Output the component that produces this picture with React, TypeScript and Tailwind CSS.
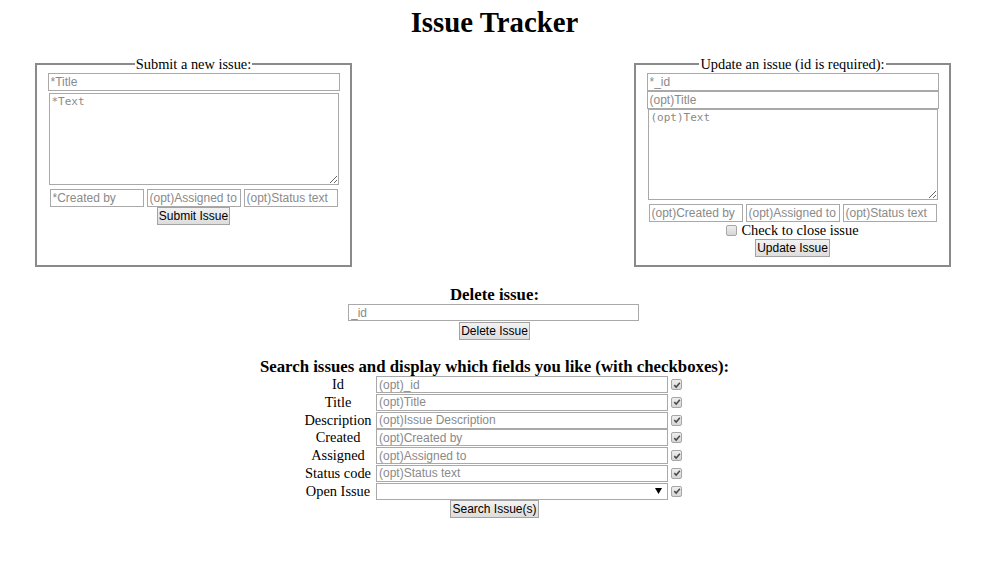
import React from "react";

const serif = "font-['Liberation_Serif','Times_New_Roman',serif]";
const field =
  "border border-[#a9a9a9] bg-white px-[2px] text-[12px] leading-none text-black outline-none font-['Liberation_Sans',Arial,sans-serif] placeholder:text-[#8a8a8a]";
const area =
  "border border-[#a9a9a9] bg-white px-[2px] py-[1px] text-[11px] leading-[14px] outline-none font-['DejaVu_Sans_Mono',monospace] placeholder:text-[#8a8a8a]";
const button =
  "h-[18px] border border-[#a3a3a3] bg-gradient-to-b from-[#f2f2f2] to-[#dddddd] px-[1px] text-[12px] leading-none text-black font-['Liberation_Sans',Arial,sans-serif]";

function Check({ checked }: { checked?: boolean }) {
  return (
    <span className="inline-flex h-[11px] w-[11px] items-center justify-center rounded-[2px] border border-[#a6a6a6] bg-gradient-to-b from-[#eeeeee] to-[#d6d6d6]">
      {checked && (
        <svg viewBox="0 0 10 10" className="h-[8px] w-[8px]">
          <path d="M1.6 5.2 L4 7.6 L8.6 2.2" fill="none" stroke="#4a4a4a" strokeWidth="1.9" />
        </svg>
      )}
    </span>
  );
}

function SubmitForm() {
  return (
    <fieldset className="flex w-[317px] flex-col items-center border-2 border-[#8a8a8a] px-0 pb-[8px]">
      <legend className="mx-auto px-[1px] text-[14.4px] leading-[16px]">Submit a new issue:</legend>
      <input className={`${field} mt-[1px] h-[18px] w-[292px]`} placeholder="*Title" />
      <textarea className={`${area} mt-[2px] h-[92px] w-[290px]`} placeholder="*Text" />
      <div className="mt-[4px] flex gap-[3px]">
        <input className={`${field} h-[18px] w-[94px]`} placeholder="*Created by" />
        <input className={`${field} h-[18px] w-[94px]`} placeholder="(opt)Assigned to" />
        <input className={`${field} h-[18px] w-[94px]`} placeholder="(opt)Status text" />
      </div>
      <button className={button}>Submit Issue</button>
    </fieldset>
  );
}

function UpdateForm() {
  return (
    <fieldset className="flex w-[317px] flex-col items-center border-2 border-[#8a8a8a] px-0 pb-[8px]">
      <legend className="mx-auto px-[1px] text-[14.4px] leading-[16px]">Update an issue (id is required):</legend>
      <input className={`${field} mt-[1px] h-[18px] w-[292px]`} placeholder="*_id" />
      <input className={`${field} h-[18px] w-[292px]`} placeholder="(opt)Title" />
      <textarea className={`${area} h-[91px] w-[290px]`} placeholder="(opt)Text" />
      <div className="mt-[4px] flex gap-[3px]">
        <input className={`${field} h-[18px] w-[94px]`} placeholder="(opt)Created by" />
        <input className={`${field} h-[18px] w-[94px]`} placeholder="(opt)Assigned to" />
        <input className={`${field} h-[18px] w-[94px]`} placeholder="(opt)Status text" />
      </div>
      <label className="flex h-[17px] items-center gap-[4px] text-[14.4px] leading-none">
        <Check />
        Check to close issue
      </label>
      <button className={button}>Update Issue</button>
    </fieldset>
  );
}

const searchRows = [
  { label: "Id", ph: "(opt)_id" },
  { label: "Title", ph: "(opt)Title" },
  { label: "Description", ph: "(opt)Issue Description" },
  { label: "Created", ph: "(opt)Created by" },
  { label: "Assigned", ph: "(opt)Assigned to" },
  { label: "Status code", ph: "(opt)Status text" },
];

export default function App() {
  return (
    <div className={`min-h-[571px] w-full bg-white text-black ${serif}`}>
      <h1 className="pt-[6px] text-center text-[28.8px] font-bold leading-[33px]">Issue Tracker</h1>

      <div className="mt-[17px] flex items-stretch justify-between pl-[35px] pr-[38px]">
        <SubmitForm />
        <UpdateForm />
      </div>

      <div className="mt-[18px] flex flex-col items-center">
        <h3 className="text-[16.8px] font-bold leading-[19px]">Delete issue:</h3>
        <input className={`${field} ml-[-2px] h-[17px] w-[291px]`} placeholder="_id" />
        <button className={`${button} mt-[1px]`}>Delete Issue</button>
      </div>

      <div className="mt-[17px] flex flex-col items-center">
        <h3 className="text-[16.8px] font-bold leading-[19px]">
          Search issues and display which fields you like (with checkboxes):
        </h3>
        <div className="grid grid-cols-[70px_292px_13px] items-center gap-x-[3px] gap-y-[0.8px] pr-[2px]">
          {searchRows.map((r) => (
            <React.Fragment key={r.label}>
              <span className="whitespace-nowrap text-center text-[14.4px] leading-[17px]">{r.label}</span>
              <input className={`${field} block h-[17px] w-[292px]`} placeholder={r.ph} />
              <Check checked />
            </React.Fragment>
          ))}
          <span className="whitespace-nowrap text-center text-[14.4px] leading-[17px]">Open Issue</span>
          <div className="relative h-[17px] w-[292px]">
            <select className={`${field} block h-[17px] w-[292px] appearance-none`} defaultValue="">
              <option value=""></option>
              <option value="true">true</option>
              <option value="false">false</option>
            </select>
            <svg
              viewBox="0 0 7 6"
              className="pointer-events-none absolute right-[6px] top-[5px] h-[6px] w-[7px]"
            >
              <path d="M0 0 H7 L3.5 6 Z" fill="#000" />
            </svg>
          </div>
          <Check checked />
        </div>
        <button className={button}>Search Issue(s)</button>
      </div>
    </div>
  );
}
